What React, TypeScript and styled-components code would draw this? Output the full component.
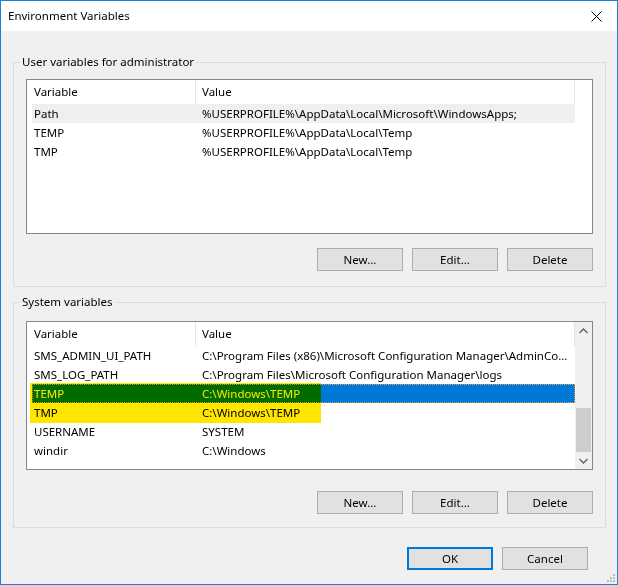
import React from "react";
import styled, { createGlobalStyle } from "styled-components";

const Global = createGlobalStyle`
  html, body { margin: 0; padding: 0; background: #f0f0f0; }
  body { font-family: "Noto Sans", "Liberation Sans", sans-serif; font-size: 11.5px; color: #000; }
  * { box-sizing: border-box; }
`;

const Window = styled.div`
  position: relative;
  width: 618px;
  height: 585px;
  border: 1px solid #1883d7;
  display: flex;
  flex-direction: column;
  background: #f0f0f0;
`;

const TitleBar = styled.div`
  height: 30px;
  flex: none;
  background: #fff;
  display: flex;
  align-items: center;
  justify-content: space-between;
  padding: 0 0 0 7px;
`;

const Title = styled.span`
  font-size: 11.5px;
  line-height: 16px;
  color: #000;
`;

const CloseBtn = styled.div`
  width: 46px;
  height: 30px;
  display: flex;
  align-items: center;
  justify-content: center;
  padding-left: 4px;
`;

const Body = styled.div`
  flex: 1;
  display: flex;
  flex-direction: column;
  padding: 23px 11px 14px 12px;
`;

const Group = styled.fieldset<{ $gapAfter?: number }>`
  margin: 0 0 ${(p) => p.$gapAfter ?? 0}px 0;
  padding: 0;
  border: 1px solid #dcdcdc;
  min-width: 0;
`;

const Legend = styled.legend`
  margin-left: 6px;
  padding: 0 2px;
  line-height: 16px;
  font-size: 11.5px;
`;

const GroupInner = styled.div<{ $top: number; $bottom: number; $btnGap: number }>`
  padding: ${(p) => p.$top}px 12px ${(p) => p.$bottom}px 12px;
  display: flex;
  flex-direction: column;
  gap: ${(p) => p.$btnGap}px;
`;

const ListBox = styled.div<{ $h: number }>`
  height: ${(p) => p.$h}px;
  border: 1px solid #828790;
  background: #fff;
  display: flex;
  overflow: hidden;
`;

const ListMain = styled.div`
  position: relative;
  flex: 1;
  min-width: 0;
  display: flex;
  flex-direction: column;
`;

const Header = styled.div`
  height: 24px;
  display: grid;
  grid-template-columns: 169px 1fr;
  flex: none;
`;

const HeaderCell = styled.div<{ $pad: number }>`
  display: flex;
  align-items: center;
  padding-left: ${(p) => p.$pad}px;
  border-right: 1px solid #e5e5e5;
  line-height: 16px;
`;

const Row = styled.div<{ $state?: "hover" | "selected" }>`
  height: 19px;
  margin-left: 5px;
  display: grid;
  grid-template-columns: 168px 1fr;
  align-items: center;
  line-height: 16px;
  white-space: nowrap;
  background: ${(p) =>
    p.$state === "selected" ? "#0078d7" : p.$state === "hover" ? "#efefef" : "transparent"};
  color: ${(p) => (p.$state === "selected" ? "#fff" : "#000")};
  outline: ${(p) => (p.$state === "selected" ? "1px dotted #f0a040" : "none")};
  outline-offset: -1px;
`;

const Cell = styled.span`
  padding: 0 2px;
  overflow: hidden;
`;

const Highlighter = styled.div<{ $top: number; $left: number; $w: number; $h: number }>`
  position: absolute;
  top: ${(p) => p.$top}px;
  left: ${(p) => p.$left}px;
  width: ${(p) => p.$w}px;
  height: ${(p) => p.$h}px;
  background: #ffe600;
  mix-blend-mode: multiply;
  pointer-events: none;
`;

const ScrollSpace = styled.div`
  width: 17px;
  flex: none;
`;

const Scrollbar = styled.div`
  width: 17px;
  flex: none;
  background: #f0f0f0;
  display: flex;
  flex-direction: column;
`;

const ScrollArrow = styled.div`
  height: 17px;
  flex: none;
  display: flex;
  align-items: center;
  justify-content: center;
`;

const ScrollTrack = styled.div`
  flex: 1;
  display: flex;
  flex-direction: column;
  justify-content: flex-end;
`;

const Thumb = styled.div`
  height: 44px;
  margin: 0 1px;
  background: #cdcdcd;
`;

const ButtonRow = styled.div`
  display: flex;
  justify-content: flex-end;
  gap: 9px;
`;

const Button = styled.button<{ $default?: boolean }>`
  width: 86px;
  height: 23px;
  padding: 0;
  font-family: inherit;
  font-size: 11.5px;
  line-height: 16px;
  color: #000;
  background: #e1e1e1;
  border: ${(p) => (p.$default ? "2px solid #0078d7" : "1px solid #adadad")};
`;

const Footer = styled.div`
  display: flex;
  justify-content: flex-end;
  gap: 9px;
  padding-right: 18px;
`;

const Grip = styled.svg`
  position: absolute;
  right: 1px;
  bottom: 1px;
`;

type Var = { name: string; value: string; state?: "hover" | "selected" };

const userVars: Var[] = [
  { name: "Path", value: "%USERPROFILE%\\AppData\\Local\\Microsoft\\WindowsApps;", state: "hover" },
  { name: "TEMP", value: "%USERPROFILE%\\AppData\\Local\\Temp" },
  { name: "TMP", value: "%USERPROFILE%\\AppData\\Local\\Temp" },
];

const sysVars: Var[] = [
  { name: "SMS_ADMIN_UI_PATH", value: "C:\\Program Files (x86)\\Microsoft Configuration Manager\\AdminCo..." },
  { name: "SMS_LOG_PATH", value: "C:\\Program Files\\Microsoft Configuration Manager\\logs" },
  { name: "TEMP", value: "C:\\Windows\\TEMP", state: "selected" },
  { name: "TMP", value: "C:\\Windows\\TEMP" },
  { name: "USERNAME", value: "SYSTEM" },
  { name: "windir", value: "C:\\Windows" },
];

const ListHeader = () => (
  <Header>
    <HeaderCell $pad={7}>Variable</HeaderCell>
    <HeaderCell $pad={6}>Value</HeaderCell>
  </Header>
);

const Chevron = ({ up }: { up?: boolean }) => (
  <svg width="9" height="6" viewBox="0 0 9 6">
    <path
      d={up ? "M0.5 5 L4.5 1 L8.5 5" : "M0.5 1 L4.5 5 L8.5 1"}
      fill="none"
      stroke="#606060"
      strokeWidth="1.3"
    />
  </svg>
);

export default function App() {
  return (
    <>
      <Global />
      <Window>
        <TitleBar>
          <Title>Environment Variables</Title>
          <CloseBtn>
            <svg width="11" height="11" viewBox="0 0 11 11">
              <path d="M0.5 0.5 L10.5 10.5 M10.5 0.5 L0.5 10.5" stroke="#000" strokeWidth="1" />
            </svg>
          </CloseBtn>
        </TitleBar>
        <Body>
          <Group $gapAfter={7}>
            <Legend>User variables for administrator</Legend>
            <GroupInner $top={9} $bottom={15} $btnGap={14}>
              <ListBox $h={155}>
                <ListMain>
                  <ListHeader />
                  {userVars.map((v) => (
                    <Row key={v.name} $state={v.state}>
                      <Cell>{v.name}</Cell>
                      <Cell>{v.value}</Cell>
                    </Row>
                  ))}
                </ListMain>
                <ScrollSpace />
              </ListBox>
              <ButtonRow>
                <Button>New...</Button>
                <Button>Edit...</Button>
                <Button>Delete</Button>
              </ButtonRow>
            </GroupInner>
          </Group>
          <Group $gapAfter={19}>
            <Legend>System variables</Legend>
            <GroupInner $top={11} $bottom={13} $btnGap={21}>
              <ListBox $h={149}>
                <ListMain>
                  <ListHeader />
                  {sysVars.map((v) => (
                    <Row key={v.name} $state={v.state}>
                      <Cell>{v.name}</Cell>
                      <Cell>{v.value}</Cell>
                    </Row>
                  ))}
                  <Highlighter $top={61} $left={3} $w={291} $h={40} />
                </ListMain>
                <Scrollbar>
                  <ScrollArrow>
                    <Chevron up />
                  </ScrollArrow>
                  <ScrollTrack>
                    <Thumb />
                  </ScrollTrack>
                  <ScrollArrow>
                    <Chevron />
                  </ScrollArrow>
                </Scrollbar>
              </ListBox>
              <ButtonRow>
                <Button>New...</Button>
                <Button>Edit...</Button>
                <Button>Delete</Button>
              </ButtonRow>
            </GroupInner>
          </Group>
          <Footer>
            <Button $default>OK</Button>
            <Button>Cancel</Button>
          </Footer>
        </Body>
        <Grip width="10" height="10" viewBox="0 0 10 10">
          <rect x="7" y="1" width="2" height="2" fill="#bcbcbc" />
          <rect x="4" y="4" width="2" height="2" fill="#bcbcbc" />
          <rect x="7" y="4" width="2" height="2" fill="#bcbcbc" />
          <rect x="1" y="7" width="2" height="2" fill="#bcbcbc" />
          <rect x="4" y="7" width="2" height="2" fill="#bcbcbc" />
          <rect x="7" y="7" width="2" height="2" fill="#bcbcbc" />
        </Grip>
      </Window>
    </>
  );
}
